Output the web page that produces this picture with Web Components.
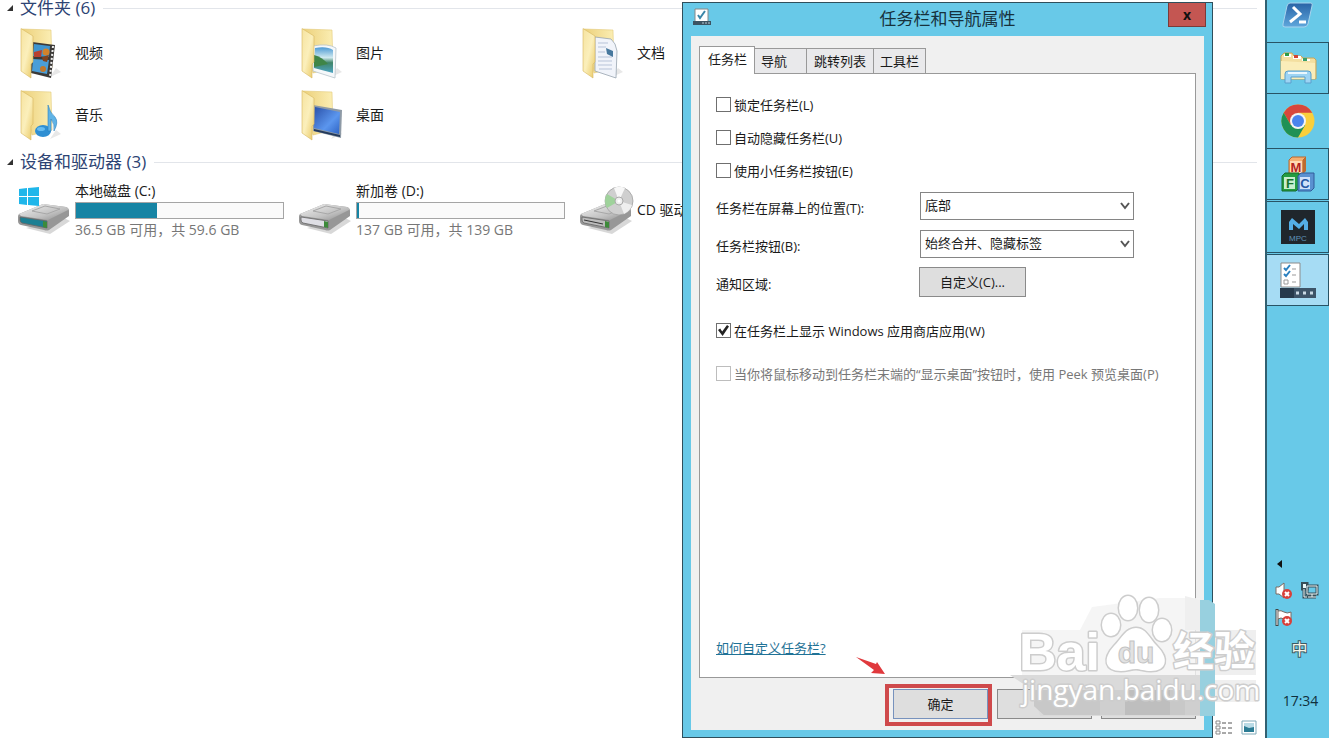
<!DOCTYPE html>
<html lang="zh-CN">
<head>
<meta charset="utf-8">
<title>任务栏和导航属性</title>
<style>
  html, body { height: 100%; }
  body {
    margin: 0;
    overflow: hidden;
    font: 13px/16px "Open Sans", "Noto Sans CJK SC", sans-serif;
    color: #1a1a1a;
    background: #fff;
    --sky: #68c9e8;
    --edge: #2f4f5c;
  }
</style>
</head>
<body>
<desktop-view></desktop-view>

<script>
// folder body shared by all library icons, the front picture goes on top
const folder = (front) => `<svg width="52" height="54" viewBox="0 0 52 54">
  <defs>
    <linearGradient id="back" x1="0" x2="1"><stop offset="0" stop-color="#ecd07a"/><stop offset="1" stop-color="#fbeeb4"/></linearGradient>
    <linearGradient id="flap" x1="0" x2="1" y1="0" y2="1"><stop offset="0" stop-color="#f6e3a0"/><stop offset=".5" stop-color="#fbefbb"/><stop offset="1" stop-color="#e9c863"/></linearGradient>
    <linearGradient id="blue" x1="0" x2="1" y1="0" y2="1"><stop offset="0" stop-color="#2a50a8"/><stop offset=".6" stop-color="#5b96ee"/><stop offset="1" stop-color="#2d62c4"/></linearGradient>
    <linearGradient id="sky" x2="0" y2="1"><stop offset="0" stop-color="#4d9ad4"/><stop offset=".4" stop-color="#cfe9ef"/><stop offset=".6" stop-color="#3f8568"/><stop offset="1" stop-color="#4fa5c4"/></linearGradient>
  </defs>
  <path d="M32 51 43 46 38 42Z" fill="#e8e8e8"/>
  <path d="M4 3 33 4 34 42 14 47Z" fill="url(#back)" stroke="#e2c978" stroke-width=".6"/>
  ${front}
  <path d="M3 2.500 15 10V36L13 38V52L3 45Z" fill="url(#flap)" stroke="#d6b75e" stroke-width=".6"/>
</svg>`;

const drive = (extra, face) => `<svg width="54" height="54" viewBox="0 0 54 54">
  <defs><linearGradient id="m" x2="1" y2="1"><stop offset="0" stop-color="#f4f4f4"/><stop offset=".6" stop-color="#c2c2c2"/><stop offset="1" stop-color="#8a8a8a"/></linearGradient></defs>
  <path d="M8 45 32 51 52 38 44 34Z" fill="#d8d8d8"/>
  <path d="M1 31 25 21 48 24Q51 25 51 28V33L31 47Q29 48 26 47L3 42Q0 41 0 38V34Q0 32 1 31Z" fill="#979797"/>
  <path d="M1 31 25 21 48 24Q51 25 50 27L30 37 3 33Z" fill="url(#m)"/>
  <path d="M14 28 27 23 42 26 29 31Z" fill="none" stroke="#a8a8a8" stroke-width="1"/>
  <path d="M2 34 29 38V45L4 40Q2 39 2 37Z" fill="${face}" stroke="#666" stroke-width=".8"/>
  <path d="M25 38 29 39V45L25 44Z" fill="#3d8a3a"/>
  ${extra}
</svg>`;

const ICONS = {
  video: folder(`<path d="M14 16 37 19 33 52 13 47Z" fill="#3c3a38"/>
    <path d="M16 18 32 20 31 31 15 30Z" fill="#3f95cf"/><path d="M15 33 31 34 29 48 14 45Z" fill="#4a9ed8"/>
    <path d="M16 26 24 24 23 31 16 31Z" fill="#b8402f"/><circle cx="28" cy="26" r="3.500" fill="#d3822b"/><path d="M24 31 31 29 29 36 25 35Z" fill="#81421d"/><circle cx="25" cy="43" r="3" fill="#c1782c"/>
    <path d="M35 20 32 51" stroke="#eee" stroke-width="2" stroke-dasharray="2 2"/>`),
  picture: folder(`<path d="M14 20Q29 17 37 22L36 52 14 45Z" fill="#f5f8fa" stroke="#b8c4cc" stroke-width=".8"/><path d="M16 22Q28 20 34 24V47L15 42Z" fill="url(#sky)"/><path d="M15 29Q23 31 29 38L15 41Z" fill="#3f8547"/>`),
  document: folder(`<path d="M15 11 31 13Q36 17 37 25L36 52 15 45Z" fill="#f1f4fa" stroke="#97a3af" stroke-width=".8"/><path d="M18 17H28M18 21H26M18 26H25M18 31H32M18 35H32M18 39H32M19 43H32" stroke="#b7c3d8"/><path d="M26 22 33 25V31L27 28Z" fill="#48799e"/>`),
  music: folder(`<ellipse cx="25" cy="43" rx="8" ry="6" fill="#2f8fd3"/><path d="M30 43V17Q32 25 37 29Q41 34 36 43Q37 36 33 31V43Z" fill="#5fb3e6" stroke="#2a7fbd" stroke-width=".6"/><ellipse cx="23" cy="41" rx="4" ry="2" fill="#66bcf0"/>`),
  desktop: folder(`<path d="M14 17 43 22 42 50 14 43Z" fill="#8e9aa6"/><path d="M16 19 41 24 40 46 15 40Z" fill="url(#blue)"/><path d="M15 41 41 47V49L15 43Z" fill="#243a5c"/>`),
  system: drive('<path d="M1 6 9 5V13H1ZM10 5 21 4V13H10ZM1 14H9V22L1 21ZM10 14H21V23L10 22Z" fill="#1fb6ea"/>', '#1c7f93'),
  disk: drive('', '#dedee4'),
  cd: drive(`<circle cx="39" cy="18" r="14" fill="#cfcfcf" stroke="#999" stroke-width=".7"/><path d="M39 18 27 11A14 14 0 0 0 27 25Z" fill="#9fd29b"/><path d="M39 18 34 5A14 14 0 0 1 45 5Z" fill="#f7f7f7"/><path d="M39 18 52 22A14 14 0 0 1 44 31Z" fill="#efefef"/><circle cx="39" cy="18" r="4" fill="#eee" stroke="#aaa"/><circle cx="39" cy="18" r="1.500" fill="#fff"/><path d="M4 37 23 41" stroke="#333"/>`, '#bcbcbc'),

  shell: `<svg width="32" height="28" viewBox="0 0 32 28"><defs><linearGradient id="g" x2="0" y2="1"><stop offset="0" stop-color="#2863a6"/><stop offset="1" stop-color="#5fa7dc"/></linearGradient></defs>
    <path d="M8 2H29Q31 2 30 5L26 23Q25 26 22 26H3Q0 26 1 23L5 5Q6 2 8 2Z" fill="url(#g)" stroke="#a9d4ee"/><path d="M11 6 18 13 8 21M17 21H24" fill="none" stroke="#fff" stroke-width="3"/></svg>`,
  files: `<svg width="38" height="34" viewBox="0 0 38 34">
    <path d="M2 5 5 2H13L15 5H22L24 7H35L37 9V28H2Z" fill="#f3dfa0" stroke="#c7a659"/><path d="M5 3H12V6H5ZM14 5H22V8H14ZM23 8H31V10H23Z" fill="#fff"/><path d="M6 2H10V5H6Z" fill="#2c9c48"/><path d="M15 4H19V7H15Z" fill="#d14434"/><path d="M24 7H28V10H24Z" fill="#39a06b"/>
    <path d="M2 10 36 12V28H2Z" fill="#faedb9"/><path d="M6 32V23Q6 20 9 20H29Q32 20 32 23V32H26V26H12V32Z" fill="#9dd4f4" stroke="#5b9fcb"/><path d="M9 22H28" stroke="#eaf8ff" stroke-width="2"/></svg>`,
  chrome: `<svg width="34" height="34" viewBox="0 0 34 34"><circle cx="17" cy="17" r="16.500" fill="#f9cf3c"/>
    <path d="M2.700 8.700A16.500 16.500 0 0 1 31.300 8.700H17L9.800 21.100Z" fill="#d8473c"/><path d="M2.700 8.700A16.500 16.500 0 0 0 17 33.500L24.200 21.100H9.800Z" fill="#1f9155"/>
    <circle cx="17" cy="17" r="8" fill="#f4f4f4"/><circle cx="17" cy="17" r="6" fill="#4a84ee"/></svg>`,
  blocks: `<svg width="34" height="36" viewBox="0 0 34 36" font-family="Liberation Sans" font-weight="bold" font-size="13" text-anchor="middle">
    <path d="M8 4 11 1H25L22 4V18H8Z" fill="#f5b072" stroke="#b8672d"/><path d="M22 4 25 1V15L22 18Z" fill="#bd6c30"/><path d="M9 5H21V17H9Z" fill="#ffd9b3"/>
    <path d="M1 20 4 17H18V32L15 35H1Z" fill="#249c41" stroke="#176b2b"/><path d="M3 21H14V33H3Z" fill="#c7efce"/>
    <path d="M17 20 20 17H33V32L30 35H17Z" fill="#5a92d1" stroke="#315d9a"/><path d="M19 21H29V33H19Z" fill="#cfe2fa"/>
    <text x="15" y="16" fill="#b3231f">M</text><text x="9" y="32" fill="#17732c">F</text><text x="24" y="32" fill="#2458a5">C</text></svg>`,
  mpc: `<svg width="34" height="34" viewBox="0 0 34 34"><rect width="34" height="34" fill="#1f262c"/><path d="M8 20V12L11 8 18 14 24 8 27 12V20H23V14L18 19 12 14V20Z" fill="#54aee6"/><text x="17" y="31" fill="#5f93b8" font-family="Liberation Sans" font-size="8" text-anchor="middle">MPC</text></svg>`,
  props: `<svg width="36" height="36" viewBox="0 0 36 36"><path d="M1 1H20V25H1Z" fill="#fff" stroke="#8b8b8b"/><path d="M4 6 6 8 10 3M4 12 6 14 10 9" fill="none" stroke="#2a80c0" stroke-width="2"/><path d="M4 18H8V22H4Z" fill="none" stroke="#999"/><path d="M12 7H16M12 13H16M12 20H16" stroke="#999"/><rect y="26" width="36" height="10" fill="#3d5468"/><path d="M0 26H14V36H0Z" fill="#263a4c"/><path d="M16 31H19M23 31H26M30 31H33" stroke="#c9d9e4" stroke-width="3"/></svg>`
};

const BTN = `button { font: inherit; color: inherit; margin: 0; padding: 0; border-radius: 0; }`;

// small helper: every element here has a static shadow tree
function define(name, html) {
  customElements.define(name, class extends HTMLElement {
    constructor() {
      super();
      this.attachShadow({ mode: 'open' });
    }
    connectedCallback() {
      this.shadowRoot.innerHTML = typeof html === 'function' ? html(this) : html;
    }
  });
}

define('explorer-group', (el) => `
  <style>
    :host { display: block; }
    h2 { display: flex; align-items: center; gap: 6px; margin: 0; padding: 0 8px 0 6px; font-size: 17px; line-height: 16px; font-weight: 400; color: #2d4373; }
    h2::after { content: ""; flex: 1; margin-left: 2px; border-top: 1px solid #e2e5ea; }
    .items { display: grid; grid-template-columns: repeat(4, 281px); padding: 6px 0 8px 18px; }
  </style>
  <h2><svg width="8" height="8"><path d="M7 1V7H1Z" fill="#333"/></svg>${el.getAttribute('heading')}</h2>
  <div class="items"><slot></slot></div>`);

define('explorer-item', (el) => {
  const info = el.getAttribute('info');
  return `
  <style>
    :host { display: flex; align-items: center; gap: 5px; height: 62px; white-space: nowrap; font-size: 14px; }
    :host([drive]) { height: 68px; }
    .icon { width: 52px; height: 54px; }
    svg { display: block; overflow: visible; }
    .text { display: flex; flex-direction: column; gap: 3px; }
    progress { appearance: none; display: block; width: 209px; height: 17px; border: 1px solid #a5a5a5; box-sizing: border-box; background: #fafafa; }
    progress::-webkit-progress-bar { background: #fafafa; }
    progress::-webkit-progress-value { background: #1684a4; }
    .info { color: #777; }
  </style>
  <div class="icon">${ICONS[el.getAttribute('icon')]}</div>
  <div class="text">
    <span><slot></slot></span>
    ${info ? `<progress max="100" value="${el.getAttribute('used')}" aria-label="${info}"></progress><span class="info">${info}</span>` : ''}
  </div>`;
});

define('check-row', (el) => `
  <style>
    :host { display: block; }
    label { display: inline-flex; align-items: center; gap: 3px; height: 33px; white-space: nowrap; }
    input { appearance: none; margin: 0; width: 15px; height: 15px; border: 1px solid #6f6f6f; background: #fff; display: grid; place-items: center; }
    input:checked::before { content: ""; width: 11px; height: 11px; background: #222; clip-path: polygon(0 45%, 20% 32%, 38% 58%, 82% 0, 100% 14%, 42% 100%); }
    input:disabled { border-color: #bdbdbd; }
    :disabled + span { color: #777; }
  </style>
  <label><input type="checkbox" ${el.hasAttribute('checked') ? 'checked' : ''} ${el.hasAttribute('disabled') ? 'disabled' : ''}><span><slot></slot></span></label>`);

define('push-button', (el) => `
  <style>
    ${BTN}
    :host { display: block; }
    button { display: block; width: 100%; height: 30px; border: 1px solid #8a8a8a; background: #dedede; }
    :host([primary]) button { border-color: #7792bd; }
  </style>
  <button type="button" aria-label="${el.getAttribute('label') || el.textContent}"><slot></slot></button>`);

define('select-row', (el) => `
  <style>
    :host { display: flex; align-items: center; height: 38px; }
    label { width: 204px; padding-top: 4px; }
    .box { position: relative; width: 214px; }
    select { appearance: none; display: block; width: 100%; height: 28px; padding: 0 24px 2px 4px; border: 1px solid #858585; border-radius: 0; background: #fff; font: inherit; color: inherit; }
    svg { position: absolute; right: 4px; top: 10px; pointer-events: none; }
  </style>
  <label for="s">${el.getAttribute('label')}</label>
  <div class="box">
    <select id="s"><option>${el.getAttribute('value')}</option></select>
    <svg width="10" height="8"><path d="M1 1 5 6 9 1" fill="none" stroke="#555" stroke-width="2"/></svg>
  </div>`);

define('tab-strip', () => `
  <style>
    ${BTN}
    :host { display: flex; align-items: flex-end; }
    button { height: 25px; padding: 0 6px 1px; border: 1px solid #999; border-left-width: 0; border-bottom: 0; background: #e9e9eb; }
    button.short { width: 52px; text-align: left; }
    button.wide { padding: 0 7px 1px; }
    .on { height: 28px; margin-bottom: -1px; padding: 0 7px 3px 8px; border-left-width: 1px; background: #fff; position: relative; }
  </style>
  <button type="button" class="on">任务栏</button><button type="button" class="short">导航</button><button type="button" class="wide">跳转列表</button><button type="button">工具栏</button>`);

define('property-window', (el) => `
  <style>
    ${BTN}
    :host { display: flex; flex-direction: column; box-sizing: border-box; border: 1px solid var(--edge); background: var(--sky); padding: 0 8px 7px; }
    header { display: flex; align-items: flex-start; height: 33px; }
    header svg { margin: 5px 0 0 2px; }
    h1 { flex: 1; margin: 0; padding-left: 16px; font-size: 17px; line-height: 32px; font-weight: 400; text-align: center; color: #17323d; }
    header button { width: 38px; height: 24px; margin-right: -2px; border: 1px solid #7c3a38; border-top: 0; background: #c45652; font: bold 14px/20px "Open Sans", sans-serif; color: #111; }
    main { flex: 1; display: flex; flex-direction: column; background: #f0f0f0; padding: 10px 8px 11px; }
  </style>
  <header>
    <svg width="18" height="18"><path d="M2 1H15V14H2Z" fill="#fff" stroke="#888"/><path d="M5 7 7 10 12 3" fill="none" stroke="#3b86a8" stroke-width="2"/><path d="M0 13H18V17H0Z" fill="#3c5362"/><path d="M9 15H11M12 15H14M15 15H17" stroke="#b5cbd6"/></svg>
    <h1>${el.getAttribute('heading')}</h1>
    <button type="button" aria-label="关闭">x</button>
  </header>
  <main><slot></slot></main>`);

define('taskbar-page', () => `
  <style>
    :host { flex: 1; display: flex; flex-direction: column; border: 1px solid #999; background: #fff; padding: 14px 16px 21px; }
    .custom { display: flex; align-items: center; height: 38px; margin-bottom: 13px; }
    .custom span { width: 203px; padding-top: 4px; }
    .custom push-button { width: 107px; }
    .last { margin-top: 10px; }
    a { margin-top: auto; align-self: flex-start; color: #1f7296; }
  </style>
  <check-row>锁定任务栏(L)</check-row>
  <check-row>自动隐藏任务栏(U)</check-row>
  <check-row>使用小任务栏按钮(E)</check-row>
  <select-row label="任务栏在屏幕上的位置(T):" value="底部"></select-row>
  <select-row label="任务栏按钮(B):" value="始终合并、隐藏标签"></select-row>
  <div class="custom"><span>通知区域:</span><push-button>自定义(C)...</push-button></div>
  <check-row checked>在任务栏上显示 Windows 应用商店应用(W)</check-row>
  <check-row class="last" disabled>当你将鼠标移动到任务栏末端的“显示桌面”按钮时，使用 Peek 预览桌面(P)</check-row>
  <a href="#help">如何自定义任务栏?</a>`);

define('dialog-actions', () => `
  <style>
    :host { display: flex; justify-content: flex-end; gap: 9px; padding-top: 11px; }
    push-button { width: 95px; }
    .ok { position: relative; }
    .ok::after { content: ""; position: absolute; inset: -5px -4px -7px -8px; border: 4px solid #cf4a4c; }
    .arrow { position: absolute; left: -38px; top: -34px; }
  </style>
  <div class="ok">
    <push-button primary>确定</push-button>
    <svg class="arrow" width="32" height="22"><path d="M1 2 21 9 22 7 30 19 16 18 19 15Z" fill="#e0393d"/></svg>
  </div>
  <push-button label="取消"></push-button>
  <push-button label="应用"></push-button>`);

define('task-button', (el) => `
  <style>
    ${BTN}
    :host { display: block; }
    button { display: grid; place-items: center; width: 100%; height: 52px; border: 1px solid transparent; border-left: 0; background: none; }
    :host([open]) button { border-color: #285365; }
    :host([active]) button { background: #a6dcf4; }
    svg { display: block; }
  </style>
  <button type="button" aria-label="${el.getAttribute('label')}">${ICONS[el.getAttribute('icon')]}</button>`);

define('system-tray', () => `
  <style>
    :host { display: flex; flex-direction: column; padding: 0 8px 28px; }
    svg { display: block; }
    .more { margin: 0 0 13px 1px; }
    .icons { display: grid; grid-template-columns: 18px 18px; gap: 9px 8px; }
    .ime { align-self: center; margin-top: 13px; padding-left: 3px; font-size: 16px; line-height: 18px; color: #f5f5e8; -webkit-text-stroke: 2px #3c5a62; paint-order: stroke fill; }
    time { margin-top: 34px; text-align: center; padding-left: 5px; font-size: 14px; line-height: 18px; color: #10303c; }
  </style>
  <svg class="more" width="8" height="10"><path d="M6 1V9L1 5Z" fill="#111"/></svg>
  <div class="icons">
    <svg width="18" height="18"><path d="M1 5H4L9 1V16L4 12H1Z" fill="#fff" stroke="#7a6a62"/><circle cx="12" cy="12" r="5" fill="#d8403a"/><path d="M10 10 14 14M14 10 10 14" stroke="#fff" stroke-width="2"/></svg>
    <svg width="18" height="18"><path d="M6 4H16V12H6ZM11 12V15M7 15H15" fill="none" stroke="#384f58" stroke-width="3"/><path d="M1 1H6V7H1ZM3 7V15H7" fill="none" stroke="#384f58" stroke-width="3"/><path d="M6 4H16V12H6ZM11 12V15M7 15H15M3 7V15H6" fill="none" stroke="#eaf7f8"/><path d="M2 2H5V6H2Z" fill="#eaf7f8"/></svg>
    <svg width="18" height="18"><path d="M2 0V17" stroke="#444" stroke-width="3"/><path d="M3 2Q6 1 9 3T16 3V11Q12 12 9 10T3 10Z" fill="#fff" stroke="#7a6a62"/><path d="M2 1V16" stroke="#fff"/><circle cx="12" cy="12" r="5" fill="#d8403a"/><path d="M10 10 14 14M14 10 10 14" stroke="#fff" stroke-width="2"/></svg>
  </div>
  <span class="ime">中</span>
  <time>17:34</time>`);

define('side-taskbar', () => `
  <style>
    :host { display: flex; flex-direction: column; justify-content: space-between; box-sizing: border-box; border-left: 2px solid #316071; background: var(--sky); overflow: hidden; }
    nav { display: flex; flex-direction: column; gap: 1px; margin-top: -11px; }
  </style>
  <nav>
    <task-button icon="shell" label="PowerShell"></task-button>
    <task-button icon="files" label="文件资源管理器" open></task-button>
    <task-button icon="chrome" label="Chrome"></task-button>
    <task-button icon="blocks" label="MFC" open></task-button>
    <task-button icon="mpc" label="MPC" open></task-button>
    <task-button icon="props" label="任务栏属性" open active></task-button>
  </nav>
  <system-tray></system-tray>`);

define('site-mark', () => `
  <style>
    :host { display: block; pointer-events: none; }
    svg { display: block; }
    .w { fill: #fff; stroke: #cdcdcd; stroke-width: 3; paint-order: stroke; stroke-linejoin: round; }
  </style>
  <svg width="255" height="138" viewBox="0 0 255 138">
    <path d="M12 40H70L82 17 150 8H190V85H12Z" fill="#f2f2f2" opacity=".8"/>
    <path d="M175 6 190 10V40H175Z" fill="#efefef"/>
    <path d="M0 85H190V126H30L22 100Z" fill="#dadada"/>
    <path d="M24 100H190V125H34L24 116Z" fill="#cfcfcf"/>
    <path d="M24 100H90V125H34L24 116ZM160 100H175V125H160Z" fill="#c8c8c8"/>
    <path d="M115 100H160V125H115Z" fill="#bebebe"/>
    <path d="M190 10H199L205 14V126H190Z" fill="#98d0df"/>
    <path d="M205 40H246V85H205ZM205 90H246V112H205Z" fill="#e8e8e8" opacity=".7"/>
    <g class="w">
      <ellipse cx="101" cy="35" rx="9" ry="11"/><ellipse cx="118" cy="18" rx="9" ry="12"/><ellipse cx="139" cy="20" rx="9" ry="12"/><ellipse cx="152" cy="40" rx="9" ry="11"/>
      <path d="M126 38C136 38 139 48 147 56C160 69 156 81 141 81C134 81 130 79 126 79C121 79 117 81 111 81C95 81 92 69 104 56C112 48 116 38 126 38Z"/>
    </g>
    <text class="w" x="9" y="80" font-family="Liberation Sans" font-weight="bold" font-size="52">Bai</text>
    <text x="126" y="73" text-anchor="middle" font-family="Liberation Sans" font-weight="bold" font-size="30" fill="#e2e2e2" stroke="#c4c4c4">du</text>
    <text class="w" x="163" y="76" font-family="Noto Sans CJK SC" font-weight="bold" font-size="41">经验</text>
    <text class="w" x="12" y="110" font-family="Open Sans" font-size="28">jingyan.baidu.com</text>
  </svg>`);

define('desktop-view', () => `
  <style>
    :host { display: flex; position: relative; height: 100vh; overflow: hidden; }
    .explorer { flex: 1; min-width: 0; display: flex; flex-direction: column; overflow: hidden; }
    .views { display: flex; justify-content: flex-end; gap: 8px; margin-top: auto; padding: 0 8px 3px 0; }
    .new-line { grid-column: 1; }
    side-taskbar { width: 64px; }
    property-window { position: absolute; top: 2px; bottom: 0; right: 116px; width: 531px; }
    site-mark { position: absolute; right: 64px; bottom: 10px; }
  </style>
  <section class="explorer">
    <explorer-group heading="文件夹 (6)">
      <explorer-item icon="video">视频</explorer-item>
      <explorer-item icon="picture">图片</explorer-item>
      <explorer-item icon="document">文档</explorer-item>
      <explorer-item icon="music" class="new-line">音乐</explorer-item>
      <explorer-item icon="desktop">桌面</explorer-item>
    </explorer-group>
    <explorer-group heading="设备和驱动器 (3)">
      <explorer-item drive icon="system" used="39" info="36.5 GB 可用，共 59.6 GB">本地磁盘 (C:)</explorer-item>
      <explorer-item drive icon="disk" used="1" info="137 GB 可用，共 139 GB">新加卷 (D:)</explorer-item>
      <explorer-item drive icon="cd">CD 驱动</explorer-item>
    </explorer-group>
    <div class="views">
      <svg width="18" height="15"><path d="M1 1H5V4H1ZM1 6H5V9H1ZM1 11H5V14H1Z" fill="none" stroke="#888"/><path d="M7 3H11M13 3H17M7 8H11M13 8H17M7 13H11M13 13H17" stroke="#555"/></svg>
      <svg width="16" height="15"><path d="M1 1H15V14H1Z" fill="#fff" stroke="#7fa9b8"/><path d="M3 3H13V12H3Z" fill="#2b7c94"/><path d="M3 3H13V7L8 8 3 6Z" fill="#b9dbe6"/></svg>
    </div>
  </section>
  <side-taskbar></side-taskbar>
  <property-window heading="任务栏和导航属性">
    <tab-strip></tab-strip>
    <taskbar-page></taskbar-page>
    <dialog-actions></dialog-actions>
  </property-window>
  <site-mark></site-mark>`);
</script>
</body>
</html>
